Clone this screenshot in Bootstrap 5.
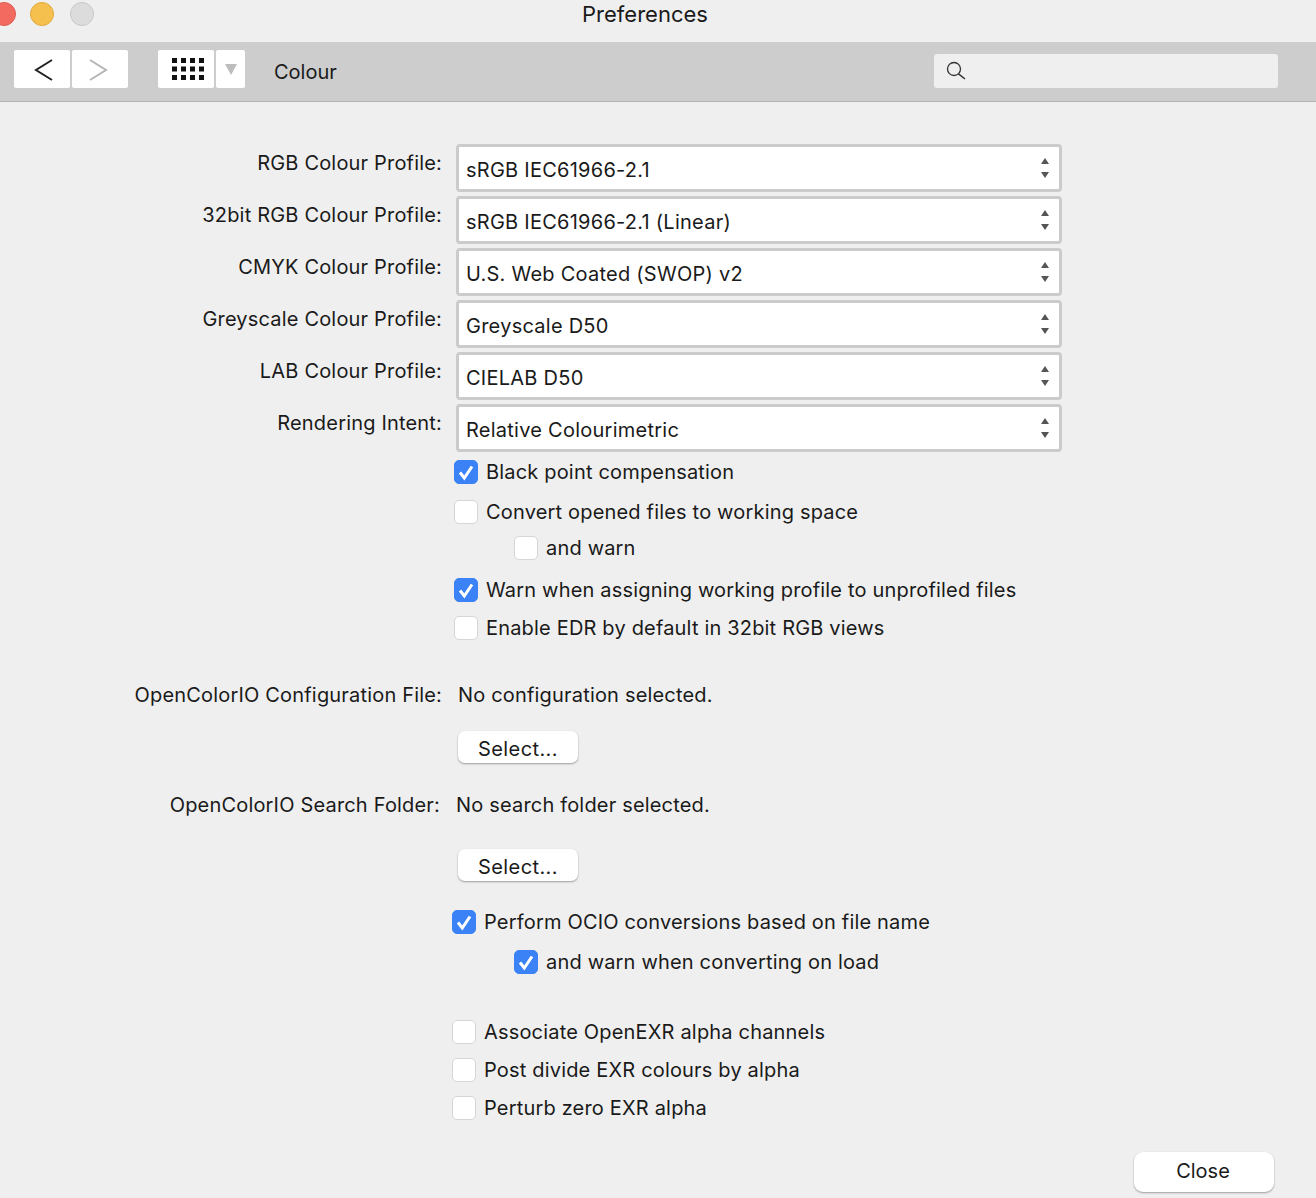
<!DOCTYPE html>
<html lang="en">
<head>
  <meta charset="UTF-8" />
  <meta name="viewport" content="width=device-width, initial-scale=1" />
  <title>Preferences</title>
  <link href="https://cdn.jsdelivr.net/npm/bootstrap@5.3.0/dist/css/bootstrap.min.css" rel="stylesheet" />
  <style>
    body {
      height: 1198px;
      overflow: hidden;
      background-color: #efefef;
      color: #1a1a1a;
      font-family: "Inter", "Liberation Sans", sans-serif;
      font-size: 20px;
      line-height: 28px;
      letter-spacing: .18px;
    }
    /* title bar */
    .title-bar { height: 42px; padding-left: 0; }
    .light { width: 24px; height: 24px; border-radius: 50%; border: 1px solid; margin-top: 2px; flex: none; }
    .light-red { background: #f26a60; border-color: #dd5a50; margin-left: -8px; }
    .light-yellow { background: #f6c04f; border-color: #e0a93f; margin-left: 14px; }
    .light-grey { background: #dcdcdc; border-color: #c8c8c8; margin-left: 16px; }
    .win-title { left: 0; width: 1290px; top: 0; text-align: center; font-size: 22px; line-height: 28px; letter-spacing: 0; }
    /* toolbar */
    .tool-bar { height: 60px; background: #cdcdcd; border-bottom: 1px solid #b4b4b4; padding-left: 14px; }
    .tool-btn { height: 38px; margin-top: -5px; background: #fff; border-radius: 2px; }
    .tool-nav { width: 56px; padding-top: 1px; }
    .tool-nav + .tool-nav { margin-left: 2px; }
    .tool-back { padding-left: 4px; }
    .tool-fwd { padding-right: 4px; }
    .tool-grid { width: 56px; margin-left: 30px; padding-left: 4px; }
    .tool-drop { width: 29px; margin-left: 2px; }
    .tool-name { margin-left: 29px; letter-spacing: 0; }
    .search-box { width: 344px; height: 34px; margin-left: 597px; margin-top: -1px; background: #efefef; border-radius: 3px; padding-left: 12px; }
    /* form rows */
    .pref-form { padding-top: 42px; }
    .pref-label { width: 442px; text-align: right; flex: none; }
    .pref-row { height: 48px; margin-bottom: 4px; }
    .pref-row .pref-label { padding-top: 5px; }
    .pref-row .form-select {
      width: 606px;
      height: 48px;
      margin-left: 14px;
      padding: 4px 30px 0 7px;
      border: 3px solid #cbcbcb;
      border-radius: 4px;
      color: #1a1a1a;
      font-size: 20px;
      letter-spacing: .25px;
      background-size: 12px 24px;
      background-position: right 8px center;
      background-image: url("data:image/svg+xml,%3csvg xmlns='http://www.w3.org/2000/svg' viewBox='0 0 12 24'%3e%3cpath fill='%23555' d='M6 2l4 6H2zM6 22l-4-6h8z'/%3e%3c/svg%3e");
    }
    .check-row { height: 24px; line-height: 24px; }
    .check-row .form-check-input {
      width: 24px;
      height: 24px;
      margin: 0 8px 0 0;
      flex: none;
      background-color: #fff;
      border: 1px solid #d6d6d6;
      border-radius: 5px;
    }
    .check-row .form-check-input:checked {
      background-color: #3b82f6;
      border-color: #3b82f6;
      background-size: 24px;
      background-image: url("data:image/svg+xml,%3csvg xmlns='http://www.w3.org/2000/svg' viewBox='0 0 24 24'%3e%3cpath fill='none' stroke='%23fff' stroke-width='3' d='M6 12.500l4.300 5.500L18 6.500'/%3e%3c/svg%3e");
    }
    .at-454 { padding-left: 454px; }
    .at-452 { padding-left: 452px; }
    .at-514 { padding-left: 514px; }
    .sp-8 { margin-top: 8px; }
    .sp-12 { margin-top: 12px; }
    .sp-14 { margin-top: 14px; }
    .sp-16 { margin-top: 16px; }
    .sp-18 { margin-top: 18px; }
    .sp-22 { margin-top: 22px; }
    .sp-28 { margin-top: 28px; }
    .sp-29 { margin-top: 29px; }
    .sp-30 { margin-top: 30px; }
    .sp-32 { margin-top: 32px; }
    .sp-41 { margin-top: 41px; }
    .sp-46 { margin-top: 46px; }
    .value-a { margin-left: 16px; }
    .value-b { margin-left: 16px; }
    .label-b { width: 440px; }
    .select-btn {
      display: block;
      width: 120px;
      height: 32px;
      margin-left: 458px;
      padding: 3px 0 0;
      background: #fff;
      border: 0;
      border-radius: 7px;
      box-shadow: 0 1px 2px rgba(0, 0, 0, .35);
      color: #1a1a1a;
      font-size: 20px;
      line-height: 28px;
      letter-spacing: .4px;
    }
    .close-btn {
      width: 140px;
      height: 40px;
      margin-right: 42px;
      padding: 0 2px 2px 0;
      background: #fff;
      border: 0;
      border-radius: 9px;
      box-shadow: 0 1px 2px rgba(0, 0, 0, .35);
      color: #1a1a1a;
      font-size: 20px;
    }
  </style>
</head>
<body>
  <div class="title-bar d-flex position-relative">
    <span class="light light-red"></span>
    <span class="light light-yellow"></span>
    <span class="light light-grey"></span>
    <div class="win-title position-absolute">Preferences</div>
  </div>

  <div class="tool-bar d-flex align-items-center">
    <div class="tool-btn tool-nav tool-back d-flex align-items-center justify-content-center">
      <svg width="20" height="24" viewBox="0 0 20 24"><path d="M18 2 2 12l16 10" fill="none" stroke="#222" stroke-width="2"/></svg>
    </div>
    <div class="tool-btn tool-nav tool-fwd d-flex align-items-center justify-content-center">
      <svg width="20" height="24" viewBox="0 0 20 24"><path d="M2 2l16 10L2 22" fill="none" stroke="#b5b5b5" stroke-width="2"/></svg>
    </div>
    <div class="tool-btn tool-grid d-flex align-items-center justify-content-center">
      <svg width="32" height="22" viewBox="0 0 32 22" fill="#111">
        <rect x="0" y="0" width="5" height="5"/><rect x="9" y="0" width="5" height="5"/><rect x="18" y="0" width="5" height="5"/><rect x="27" y="0" width="5" height="5"/>
        <rect x="0" y="8.500" width="5" height="5"/><rect x="9" y="8.500" width="5" height="5"/><rect x="18" y="8.500" width="5" height="5"/><rect x="27" y="8.500" width="5" height="5"/>
        <rect x="0" y="17" width="5" height="5"/><rect x="9" y="17" width="5" height="5"/><rect x="18" y="17" width="5" height="5"/><rect x="27" y="17" width="5" height="5"/>
      </svg>
    </div>
    <div class="tool-btn tool-drop d-flex align-items-center justify-content-center">
      <svg width="12" height="11" viewBox="0 0 12 11"><path d="M0 0h12L6 11z" fill="#bdbdbd"/></svg>
    </div>
    <div class="tool-name">Colour</div>
    <div class="search-box d-flex align-items-center">
      <svg width="20" height="20" viewBox="0 0 20 20"><circle cx="8" cy="8" r="6.500" fill="none" stroke="#333" stroke-width="1.300"/><path d="M12.500 12.800 19 18" stroke="#333" stroke-width="1.500"/></svg>
    </div>
  </div>

  <div class="pref-form">
    <div class="pref-row d-flex">
      <div class="pref-label">RGB Colour Profile:</div>
      <select class="form-select"><option>sRGB IEC61966-2.1</option></select>
    </div>
    <div class="pref-row d-flex">
      <div class="pref-label">32bit RGB Colour Profile:</div>
      <select class="form-select"><option>sRGB IEC61966-2.1 (Linear)</option></select>
    </div>
    <div class="pref-row d-flex">
      <div class="pref-label">CMYK Colour Profile:</div>
      <select class="form-select"><option>U.S. Web Coated (SWOP) v2</option></select>
    </div>
    <div class="pref-row d-flex">
      <div class="pref-label">Greyscale Colour Profile:</div>
      <select class="form-select"><option>Greyscale D50</option></select>
    </div>
    <div class="pref-row d-flex">
      <div class="pref-label">LAB Colour Profile:</div>
      <select class="form-select"><option>CIELAB D50</option></select>
    </div>
    <div class="pref-row d-flex">
      <div class="pref-label">Rendering Intent:</div>
      <select class="form-select"><option>Relative Colourimetric</option></select>
    </div>

    <label class="check-row d-flex align-items-center at-454 sp-8"><input class="form-check-input" type="checkbox" checked />Black point compensation</label>
    <label class="check-row d-flex align-items-center at-454 sp-16"><input class="form-check-input" type="checkbox" />Convert opened files to working space</label>
    <label class="check-row d-flex align-items-center at-514 sp-12"><input class="form-check-input" type="checkbox" />and warn</label>
    <label class="check-row d-flex align-items-center at-454 sp-18"><input class="form-check-input" type="checkbox" checked />Warn when assigning working profile to unprofiled files</label>
    <label class="check-row d-flex align-items-center at-454 sp-14"><input class="form-check-input" type="checkbox" />Enable EDR by default in 32bit RGB views</label>

    <div class="d-flex sp-41">
      <div class="pref-label">OpenColorIO Configuration File:</div>
      <div class="value-a">No configuration selected.</div>
    </div>
    <button class="select-btn sp-22" type="button">Select...</button>
    <div class="d-flex sp-28">
      <div class="pref-label label-b">OpenColorIO Search Folder:</div>
      <div class="value-b">No search folder selected.</div>
    </div>
    <button class="select-btn sp-30" type="button">Select...</button>

    <label class="check-row d-flex align-items-center at-452 sp-29"><input class="form-check-input" type="checkbox" checked />Perform OCIO conversions based on file name</label>
    <label class="check-row d-flex align-items-center at-514 sp-16"><input class="form-check-input" type="checkbox" checked />and warn when converting on load</label>
    <label class="check-row d-flex align-items-center at-452 sp-46"><input class="form-check-input" type="checkbox" />Associate OpenEXR alpha channels</label>
    <label class="check-row d-flex align-items-center at-452 sp-14"><input class="form-check-input" type="checkbox" />Post divide EXR colours by alpha</label>
    <label class="check-row d-flex align-items-center at-452 sp-14"><input class="form-check-input" type="checkbox" />Perturb zero EXR alpha</label>

    <div class="d-flex justify-content-end sp-32">
      <button class="close-btn" type="button">Close</button>
    </div>
  </div>

  <script src="https://cdn.jsdelivr.net/npm/bootstrap@5.3.0/dist/js/bootstrap.bundle.min.js"></script>
</body>
</html>
